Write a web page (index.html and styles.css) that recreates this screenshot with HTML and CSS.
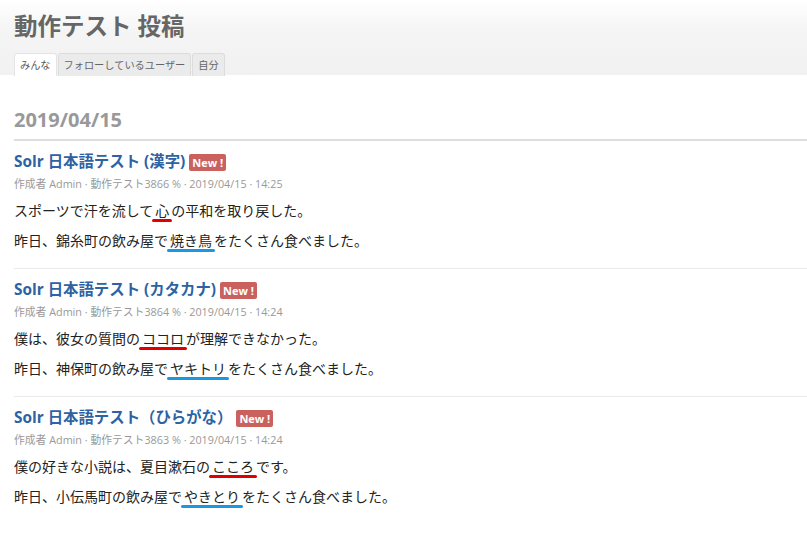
FILE: index.html
```html
<!DOCTYPE html>
<html lang="ja">
<head>
<meta charset="utf-8">
<title>動作テスト 投稿</title>
<link rel="stylesheet" href="styles.css">
</head>
<body>
<header class="header">
  <h1 class="page-title">動作テスト 投稿</h1>
  <nav class="tabs">
    <a class="tab tab-active">みんな</a>
    <a class="tab">フォローしているユーザー</a>
    <a class="tab">自分</a>
  </nav>
</header>
<main class="content">
  <h2 class="date-heading">2019/04/15</h2>

  <article class="post">
    <h3 class="post-title">Solr 日本語テスト (漢字) <span class="badge">New !</span></h3>
    <div class="meta">作成者 Admin · 動作テスト3866 % · 2019/04/15 · 14:25</div>
    <div class="post-body">
      <p>スポーツで汗を流して<span class="mark mark-red">心</span>の平和を取り戻した。</p>
      <p>昨日、錦糸町の飲み屋で<span class="mark mark-blue">焼き鳥</span>をたくさん食べました。</p>
    </div>
  </article>

  <article class="post">
    <h3 class="post-title">Solr 日本語テスト (カタカナ) <span class="badge">New !</span></h3>
    <div class="meta">作成者 Admin · 動作テスト3864 % · 2019/04/15 · 14:24</div>
    <div class="post-body">
      <p>僕は、彼女の質問の<span class="mark mark-red">ココロ</span>が理解できなかった。</p>
      <p>昨日、神保町の飲み屋で<span class="mark mark-blue">ヤキトリ</span>をたくさん食べました。</p>
    </div>
  </article>

  <article class="post post-last">
    <h3 class="post-title">Solr 日本語テスト（ひらがな） <span class="badge">New !</span></h3>
    <div class="meta">作成者 Admin · 動作テスト3863 % · 2019/04/15 · 14:24</div>
    <div class="post-body">
      <p>僕の好きな小説は、夏目漱石の<span class="mark mark-red">こころ</span>です。</p>
      <p>昨日、小伝馬町の飲み屋で<span class="mark mark-blue">やきとり</span>をたくさん食べました。</p>
    </div>
  </article>
</main>
</body>
</html>
```

FILE: styles.css
```css
* { box-sizing: border-box; }

html, body {
  margin: 0;
  padding: 0;
  background: #fff;
}

body {
  font-family: "Open Sans", "Noto Sans CJK JP", sans-serif;
  color: #222;
}

.header {
  background: linear-gradient(#ffffff 0px, #f5f5f5 30px, #f1f1f1 75px);
  padding: 11px 0 0 14px;
  height: 75px;
}

.page-title {
  margin: 0;
  font-size: 23.5px;
  line-height: 30px;
  font-weight: bold;
  color: #666;
}

.tabs {
  display: flex;
  margin-top: 12px;
  height: 23px;
}

.tab {
  display: block;
  height: 23px;
  line-height: 22px;
  padding: 0 5px;
  font-size: 10.2px;
  color: #666;
  background: #ebebeb;
  border: 1px solid #dcdcdc;
  border-bottom: none;
  border-radius: 3px 3px 0 0;
  margin-right: 1px;
}

.tab-active {
  background: #fff;
  color: #555;
  border-color: #e4e4e4;
}

.content {
  padding-left: 14px;
}

.date-heading {
  margin: 33px 0 0 0;
  font-size: 20px;
  line-height: 24px;
  font-weight: bold;
  color: #999;
  padding-bottom: 7px;
  border-bottom: 2px solid #ddd;
}

.post {
  padding: 11px 0 12px 0;
  border-bottom: 1px solid #eaeaea;
}

.post-last {
  border-bottom: none;
}

.post-title {
  margin: 0;
  font-size: 15.4px;
  line-height: 20px;
  font-weight: bold;
  color: #2d62a3;
}

.badge {
  display: inline-block;
  vertical-align: top;
  margin-top: 2px;
  background: #c9625f;
  color: #fff;
  font-size: 11px;
  line-height: 17px;
  padding: 0 3px;
  border-radius: 2px;
}

.meta {
  margin-top: 4px;
  font-size: 10.8px;
  line-height: 16px;
  color: #999;
}

.post-body {
  margin-top: 4px;
}

.post-body p {
  margin: 0;
  font-size: 14px;
  line-height: 30px;
}

.mark {
  position: relative;
  display: inline-block;
  line-height: 18px;
  padding: 0 2px;
}

.mark::after {
  content: "";
  position: absolute;
  left: -1px;
  right: -1px;
  bottom: -2px;
  height: 3px;
  border-radius: 2px;
}

.mark-red::after { background: #e00000; }
.mark-blue::after { background: #1a96e2; }
```
